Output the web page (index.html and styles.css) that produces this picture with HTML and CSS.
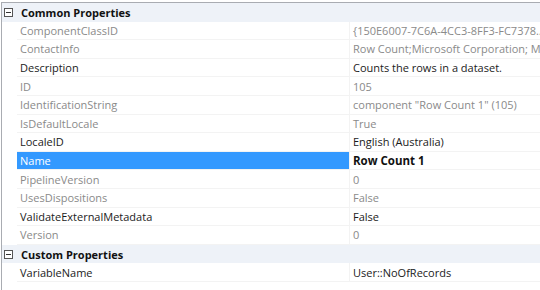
FILE: index.html
```html
<!DOCTYPE html>
<html lang="en">
<head>
  <meta charset="UTF-8">
  <title>Properties</title>
  <link rel="stylesheet" href="styles.css">
</head>
<body>
  <div class="grid">
    <div class="cat"><span class="toggle"></span>Common Properties</div>
    <div class="row ro"><div class="name">ComponentClassID</div><div class="val">{150E6007-7C6A-4CC3-8FF3-FC7378…</div></div>
    <div class="row ro"><div class="name">ContactInfo</div><div class="val">Row Count;Microsoft Corporation; Microsoft</div></div>
    <div class="row"><div class="name">Description</div><div class="val">Counts the rows in a dataset.</div></div>
    <div class="row ro"><div class="name">ID</div><div class="val">105</div></div>
    <div class="row ro"><div class="name">IdentificationString</div><div class="val">component "Row Count 1" (105)</div></div>
    <div class="row ro"><div class="name">IsDefaultLocale</div><div class="val">True</div></div>
    <div class="row"><div class="name">LocaleID</div><div class="val">English (Australia)</div></div>
    <div class="row sel"><div class="name">Name</div><div class="val bold">Row Count 1</div></div>
    <div class="row ro"><div class="name">PipelineVersion</div><div class="val">0</div></div>
    <div class="row ro"><div class="name">UsesDispositions</div><div class="val">False</div></div>
    <div class="row"><div class="name">ValidateExternalMetadata</div><div class="val">False</div></div>
    <div class="row ro"><div class="name">Version</div><div class="val">0</div></div>
    <div class="cat"><span class="toggle"></span>Custom Properties</div>
    <div class="row"><div class="name">VariableName</div><div class="val">User::NoOfRecords</div></div>
  </div>
</body>
</html>
```

FILE: styles.css
```css
body {
  margin: 0;
  background: #fff;
  font-family: "Open Sans", "Noto Sans", sans-serif;
  font-size: 11px;
  color: #1b1b1b;
  overflow: hidden;
}
.grid {
  margin-top: 2px;
  margin-left: 1px;
  border-top: 1px solid #a9acb2;
  border-left: 1px solid #a9acb2;
  height: 300px;
}
.cat {
  height: 18.6px;
  display: flex;
  align-items: center;
  background: #eef2f8;
  font-weight: bold;
  font-size: 11px;
  color: #111;
}
.toggle {
  width: 7px;
  height: 7px;
  border: 1px solid #555;
  margin: 0 8px 0 2px;
  position: relative;
  background: #fff;
}
.toggle::after {
  content: "";
  position: absolute;
  left: 1px;
  right: 1px;
  top: 3px;
  height: 1px;
  background: #333;
}
.row {
  height: 18.6px;
  display: flex;
  margin-left: 15px;
}
.name, .val {
  display: flex;
  align-items: center;
  border-bottom: 1px solid #f3f3f3;
  box-sizing: border-box;
  white-space: nowrap;
  overflow: hidden;
}
.name {
  width: 333px;
  padding-left: 3px;
  border-right: 1px solid #f3f3f3;
}
.val {
  flex: 1;
  padding-left: 3px;
}
.ro .name, .ro .val {
  color: #8a8a8a;
}
.sel .name {
  background: #3399ff;
  color: #fff;
}
.bold {
  font-weight: bold;
  font-size: 11.5px;
  color: #111;
}
```
